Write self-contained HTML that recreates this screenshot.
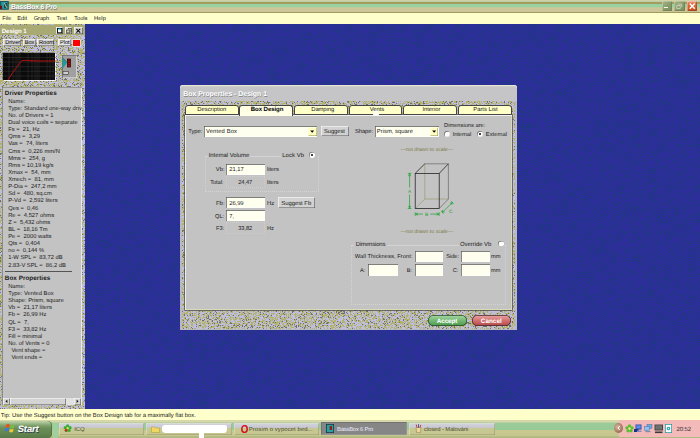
<!DOCTYPE html>
<html>
<head>
<meta charset="utf-8">
<title>BassBox 6 Pro</title>
<style>
html,body{margin:0;padding:0;background:#2b3396;}
body{width:700px;height:438px;overflow:hidden;position:relative;font-family:"Liberation Sans",sans-serif;font-size:6px;color:#202020;text-rendering:geometricPrecision;}
.a{position:absolute;}
.t{position:absolute;white-space:nowrap;line-height:7.1px;font-size:5.8px;}
.b{font-weight:bold;}
#titlebar{left:0;top:0;width:700px;height:12.7px;background:linear-gradient(#d6d0a2 0,#d0d0a4 .9px,#b8d0a8 1.1px,#b8d0a8 1.7px,#a49c5c 2.1px,#a49c5c 3.6px,#98d0a0 4.1px,#98d0a0 7.2px,#ccc698 7.6px,#ccc698 11.6px,#a49c5c 11.9px,#a49c5c 12.7px);}
#menubar{left:0;top:12.7px;width:700px;height:10.9px;background:#ffffcc;}
#mdi{left:0;top:23.6px;width:700px;height:385.7px;background:#2b3396;}
#status{left:0;top:409.2px;width:700px;height:11px;background:#ffffcc;}
#taskbar{left:0;top:420.1px;width:700px;height:17.9px;background:linear-gradient(#d0d09c 0,#dcdcb4 1.2px,#d0d0a0 2.2px,#9acc9a 3px,#98ca98 9.8px,#c8c890 10.4px,#c6c68e 15.6px,#b4bc86 16.2px,#b0b880 17.9px);}
/* left child window */
#child{left:0;top:24.3px;width:85px;height:385px;background:#b9b9a4;}
#childtitle{left:0;top:1px;width:84.7px;height:9.8px;background:#a9a974;}
.cbtn{position:absolute;top:1.8px;height:7.4px;width:7.6px;background:#d0d0d0;box-shadow:inset .6px .6px 0 #fff,inset -.6px -.6px 0 #444;}
.btn{position:absolute;background:#d4d4d4;box-shadow:inset .6px .6px 0 #fff,inset -.6px -.6px 0 #555;text-align:center;font-size:5.5px;line-height:7px;white-space:nowrap;}
#props{left:2.2px;top:63px;width:79.5px;height:318px;background:#c3c3c3;box-shadow:inset .6px .6px 0 #666,inset -.6px -.6px 0 #fff;overflow:hidden;}
#ptxt{left:2.6px;top:4.25px;white-space:nowrap;font-size:5.8px;}
#ptxt b,#ptxt i{display:block;height:7.134px;line-height:7.134px;font-style:normal;}
#ptxt b{font-size:6.3px;letter-spacing:.05px;position:relative;top:-1.4px;}
#ptxt i{padding-left:3.4px;}
.dd{background:#ffffc4;color:#000;box-shadow:inset .5px .5px 0 #fffff0,inset -.5px -.5px 0 #8c8c50;}
/* dialog */
#dlg{left:180px;top:85.2px;width:337px;height:245.3px;background:#b9b9c0;border-radius:3px 3px 0 0;}
#dlgtitle{left:0;top:0;width:337px;height:15.4px;background:#c5c5c7;border-radius:3px 3px 0 0;box-shadow:inset 0 1.2px 0 #e6e6d0;}
#dlgnoise{left:2px;top:15.4px;width:333px;height:228.6px;background:#b8b8a0;}
.tab{position:absolute;top:19.8px;height:10px;border-bottom-width:.9px !important;width:53.6px;background:#ffffc8;border:.6px solid #444;border-radius:3px 3px 0 0;box-sizing:border-box;text-align:center;font-size:6px;line-height:9px;}
#pane{left:5px;top:29.8px;width:327px;height:195.5px;background:#c3c3c3;box-shadow:inset .7px .7px 0 #fff,inset -.7px -.7px 0 #e4e4b8,0 0 0 .7px #484848;}
.inp{position:absolute;background:#fffff0;box-shadow:inset .7px .7px 0 #555,inset -.6px -.6px 0 #fff;font-size:6px;line-height:10px;white-space:nowrap;box-sizing:border-box;padding-left:2.5px;}
.flat{position:absolute;border:.6px dotted #cdcdcd;box-sizing:border-box;text-align:center;font-size:6px;line-height:9.5px;}
.grp{position:absolute;border:.6px dotted #d4d4d4;border-top:.6px solid #d4d4d4;box-sizing:border-box;}
.radio{position:absolute;width:5.8px;height:5.8px;border-radius:50%;background:#fff;box-shadow:inset .7px .7px 0 #666,inset -.5px -.5px 0 #ddd;}
.radio.on::after{content:"";position:absolute;left:1.8px;top:1.8px;width:2.2px;height:2.2px;border-radius:50%;background:#000;}
.tb{position:absolute;top:3px;height:12.4px;background:linear-gradient(#d4d4dc 0,#c8c8d6 4.4px,#c8c894 5px,#c6c690 12.4px);border-radius:1px;box-shadow:inset .5px .5px 0 #e4e4d0,inset -.5px -.5px 0 #94946c;font-size:5.8px;line-height:12.6px;white-space:nowrap;color:#333;}
</style>
</head>
<body>
<svg width="0" height="0" style="position:absolute"><defs>
<filter id="n1" x="0" y="0" width="100%" height="100%" color-interpolation-filters="sRGB">
<feTurbulence type="fractalNoise" baseFrequency="0.75" numOctaves="1" seed="5"/>
<feColorMatrix type="matrix" values="1 0 0 0 0  1 0 0 0 0  1 0 0 0 0  0 0 0 0 1"/>
<feComponentTransfer>
<feFuncR type="discrete" tableValues=".75 .75 .75 .75 .75 .75 .75 .75 .75 .75 .70 .75 .70 .45 .75 .70 .75 .70 .75 .70 .75 .45 .70 .75 .75 .75 .75 .75 .75 .75 .75 .75"/>
<feFuncG type="discrete" tableValues=".75 .75 .75 .75 .75 .75 .75 .75 .75 .75 .70 .75 .70 .45 .75 .70 .75 .70 .75 .70 .75 .45 .70 .75 .75 .75 .75 .75 .75 .75 .75 .75"/>
<feFuncB type="discrete" tableValues=".87 .87 .87 .87 .87 .87 .87 .87 .87 .87 .42 .87 .42 .43 .87 .42 .87 .42 .87 .42 .87 .43 .42 .87 .87 .87 .87 .87 .87 .87 .87 .87"/>
</feComponentTransfer>
</filter>
<filter id="n2" x="0" y="0" width="100%" height="100%" color-interpolation-filters="sRGB">
<feTurbulence type="fractalNoise" baseFrequency="0.72" numOctaves="1" seed="2"/>
<feColorMatrix type="matrix" values="1 0 0 0 0  1 0 0 0 0  1 0 0 0 0  0 0 0 0 1"/>
<feComponentTransfer>
<feFuncR type="discrete" tableValues=".18 .18 .18 .18 .18 .18 .18 .18 .18 .18 .18 .12 .18 .12 .18 .18 .18 .18 .12 .18 .12 .18 .18 .18 .18 .18 .18 .18 .18 .18 .18 .18"/>
<feFuncG type="discrete" tableValues=".18 .18 .18 .18 .18 .18 .18 .18 .18 .18 .18 .23 .18 .23 .18 .18 .18 .18 .23 .18 .23 .18 .18 .18 .18 .18 .18 .18 .18 .18 .18 .18"/>
<feFuncB type="discrete" tableValues=".61 .61 .61 .61 .61 .61 .61 .61 .61 .61 .61 .50 .61 .50 .61 .61 .61 .61 .50 .61 .50 .61 .61 .61 .61 .61 .61 .61 .61 .61 .61 .61"/>
</feComponentTransfer>
</filter>
</defs></svg>
<div class="a" id="mdi"><svg class="a" style="left:0;top:0" width="700" height="386"><rect width="700" height="386" filter="url(#n2)"/></svg></div>
<div class="a" style="left:0;top:23.4px;width:84.700px;height:2px;background:#dcdcd4"></div>

<div class="a" id="titlebar">
  <div class="a" style="left:661.900px;top:.9px;width:10.200px;height:10.200px;border-radius:1.500px;background:linear-gradient(135deg,#a4b48c,#869a68 60%,#7c9060);box-shadow:inset .5px .5px 0 #d0d8b8,inset -.5px -.5px 0 #66784c"><div class="a" style="left:2.600px;top:6.300px;width:3.600px;height:1.300px;background:#f4f4e8"></div></div>
  <div class="a" style="left:674.300px;top:.9px;width:10.300px;height:10.200px;border-radius:1.500px;background:linear-gradient(135deg,#a4b48c,#869a68 60%,#7c9060);box-shadow:inset .5px .5px 0 #d0d8b8,inset -.5px -.5px 0 #66784c"><svg class="a" style="left:0;top:0" width="10.300" height="10.200" viewBox="0 0 10.300 10.200"><path d="M4.300 3.200H7.700V6.200M2.800 4.600H6.200V7.600H2.800Z" fill="none" stroke="#d4dcc4" stroke-width=".8"/></svg></div>
  <div class="a" style="left:686.700px;top:.9px;width:10.500px;height:10.200px;border-radius:1.500px;background:linear-gradient(#f0a8a0 0,#e07048 25%,#d85c28 70%,#c04c20);box-shadow:inset .5px .5px 0 #f8d0c8,inset -.5px -.5px 0 #8c3818"><svg class="a" style="left:0;top:0" width="10.500" height="10.200" viewBox="0 0 10.500 10.200"><path d="M2.700 2.500L7.800 7.700M7.800 2.500L2.700 7.700" stroke="#fff" stroke-width="1.400"/></svg></div>
  <svg class="a" style="left:0;top:1px" width="8.800" height="8.800" viewBox="0 0 11 11"><rect x="0" y="0" width="11" height="11" fill="#1c5860"/><rect x="1.500" y="1.200" width="8" height="8.600" fill="#2a98a0"/><rect x="0" y="6" width="2.600" height="4" fill="#701010"/><rect x="5" y="2.500" width="4" height="6.500" fill="#184850"/><path d="M5.500 2.500L8.500 8.500" stroke="#d8d8a0" stroke-width="1.100"/></svg>
</div>

<div class="a" id="menubar">
</div>

<!-- LEFT CHILD WINDOW -->
<div class="a" id="child">
  <svg class="a" style="left:0;top:0" width="85" height="385"><rect width="85" height="385" filter="url(#n1)"/></svg>
  <div class="a" id="childtitle">
    <div class="cbtn" style="left:56px;width:7.4px"><svg class="a" style="left:0;top:0" width="7.4" height="7.4" viewBox="0 0 7.4 7.4"><rect x="1.500" y="1.500" width="4.300" height="4.300" fill="#fff" stroke="#111" stroke-width="1"/><rect x="2.500" y="1.600" width="2.500" height="1.500" fill="#40e0e0"/></svg></div>
    <div class="cbtn" style="left:64.600px;width:7.700px"><svg class="a" style="left:0;top:0" width="7.700" height="7.400" viewBox="0 0 7.700 7.400"><path d="M3 1.500H6.200V5M1.600 3H4.800V6H1.600Z" fill="none" stroke="#555530" stroke-width=".9"/></svg></div>
    <div class="cbtn" style="left:74px;width:8.600px"><svg class="a" style="left:0;top:0" width="8.600" height="7.400" viewBox="0 0 8.600 7.400"><path d="M2.400 1.900L6.200 5.700M6.200 1.900L2.400 5.700" stroke="#111" stroke-width="1.200"/></svg></div>
  </div>
  <div class="btn" style="left:3px;top:15px;width:18.2px;height:6.8px"></div>
  <div class="btn" style="left:23.3px;top:15px;width:12.6px;height:6.8px"></div>
  <div class="btn" style="left:37.3px;top:15px;width:16.7px;height:6.8px"></div>
  <div class="btn" style="left:58.2px;top:15px;width:13px;height:6.8px;background:#e4e4e4"></div>
  <div class="a" style="left:73.4px;top:15.7px;width:6.6px;height:6px;background:#f00;box-shadow:0 0 0 .6px #fff"></div>
  <!-- graph -->
  <div class="a" style="left:2.700px;top:28.800px;width:52.600px;height:27px;background:#0a0a0a;box-shadow:.8px .8px 0 #fff,-.5px -.5px 0 #666">
    <svg class="a" style="left:0;top:0" width="53" height="27.4" viewBox="0 0 53 27.4">
      <g stroke="#3a3a3a" stroke-width=".5">
        <path d="M0 4.5H53M0 9H53M0 13.7H53M0 18.3H53M0 23H53"/>
        <path d="M6 0V27.4M10 0V27.4M13 0V27.4M15 0V27.4M17 0V27.4M25 0V27.4M29 0V27.4M32 0V27.4M34 0V27.4M36 0V27.4M44 0V27.4M47 0V27.4M50 0V27.4"/>
      </g>
      <path d="M5 26.800L9.900 19.400L13.700 14.300L16.900 9.800Q18.300 7.700 19.900 7.500L26 7.300M33 8H52.600" fill="none" stroke="#b81010" stroke-width="1"/><path d="M26 7.700H33.200" stroke="#8c1010" stroke-width="1.500"/>
    </svg>
  </div>
  <!-- speaker icon -->
  <div class="a" style="left:62.3px;top:30.9px;width:15.1px;height:22.5px;background:#a0a0a0;box-shadow:inset .6px .6px 0 #555,inset -.6px -.6px 0 #eee">
    <svg class="a" style="left:0;top:0" width="15.1" height="22.5" viewBox="0 0 15.1 22.5">
      <path d="M.6 2.400L5.200 7.600L.6 13.800Z" fill="#1c9c9c"/><path d="M.6 2.400L5.200 7.600" stroke="#0c5858" stroke-width=".5"/>
      <rect x="5.400" y="4" width="3.200" height="8" fill="#a01414" stroke="#200" stroke-width=".7"/><path d="M6.200 5.500H7.800M6.200 7.500H7.800M6.200 9.500H7.800" stroke="#300" stroke-width=".7"/>
      <rect x="1" y="16.4" width="5.4" height="3" fill="#d0d0d0" stroke="#333" stroke-width=".6"/>
    </svg>
  </div>
  <!-- props -->
  <div class="a" id="props">
    <div class="a" id="ptxt">
      <b>Driver Properties</b>
      <i>Name:</i>
      <i>Type: Standard one-way driv</i>
      <i>No. of Drivers = 1</i>
      <i>Dual voice coils = separate</i>
      <i>Fs =&nbsp; 21, Hz</i>
      <i>Qms =&nbsp; 3,29</i>
      <i>Vas =&nbsp; 74, liters</i>
      <i>Cms =&nbsp; 0,226 mm/N</i>
      <i>Mms =&nbsp; 254, g</i>
      <i>Rms = 10,19 kg/s</i>
      <i>Xmax =&nbsp; 54, mm</i>
      <i>Xmech =&nbsp; 81, mm</i>
      <i>P-Dia =&nbsp; 247,2 mm</i>
      <i>Sd =&nbsp; 480, sq.cm</i>
      <i>P-Vd =&nbsp; 2,592 liters</i>
      <i>Qes =&nbsp; 0,46</i>
      <i>Re =&nbsp; 4,527 ohms</i>
      <i>Z =&nbsp; 5,432 ohms</i>
      <i>BL =&nbsp; 18,16 Tm</i>
      <i>Pe =&nbsp; 2000 watts</i>
      <i>Qts =&nbsp; 0,404</i>
      <i>no =&nbsp; 0,144 %</i>
      <i>1-W SPL =&nbsp; 83,72 dB</i>
      <i>2.83-V SPL =&nbsp; 86,2 dB</i>
      <b>&nbsp;</b>
      <b>Box Properties</b>
      <i>Name:</i>
      <i>Type: Vented Box</i>
      <i>Shape: Prism, square</i>
      <i>Vb =&nbsp; 21,17 liters</i>
      <i>Fb =&nbsp; 26,99 Hz</i>
      <i>QL =&nbsp; 7,</i>
      <i>F3 =&nbsp; 33,82 Hz</i>
      <i>Fill = minimal</i>
      <i>No. of Vents = 0</i>
      <i>&nbsp;&nbsp;Vent shape =</i>
      <i>&nbsp;&nbsp;Vent ends =</i>
    </div>
    <div class="a" style="left:3px;top:183.700px;width:67px;height:.6px;background:#555"></div>
    <!-- scrollbar -->
    <div class="a" style="left:.5px;top:310.700px;width:78.500px;height:6.600px;background:#e2e2e2"></div>
    <div class="btn" style="left:.5px;top:310.700px;width:7px;height:6.600px"><svg class="a" style="left:0;top:0" width="7" height="6.600" viewBox="0 0 7 6.600"><path d="M4.400 1.700V4.900L2.400 3.300Z" fill="#111"/></svg></div>
    <div class="btn" style="left:7.500px;top:310.700px;width:56.600px;height:6.600px"></div>
    <div class="btn" style="left:72.200px;top:310.700px;width:6.700px;height:6.600px"><svg class="a" style="left:0;top:0" width="6.700" height="6.600" viewBox="0 0 6.700 6.600"><path d="M2.600 1.700V4.900L4.600 3.300Z" fill="#111"/></svg></div>
  </div>
</div>

<!-- DIALOG -->
<div class="a" id="dlg">
  <div class="a" id="dlgnoise"><svg class="a" style="left:0;top:0" width="333" height="228.6"><rect width="333" height="228.6" filter="url(#n1)"/></svg></div>
  <div class="a" id="dlgtitle"></div>
  <div class="tab" style="left:5px"></div>
  <div class="tab" style="left:114px"></div>
  <div class="tab" style="left:168.6px"></div>
  <div class="tab" style="left:223.2px"></div>
  <div class="tab" style="left:277.8px;width:54.2px"></div>
  <div class="a" id="pane"></div>
  <div class="tab b" style="left:59.4px;top:19.5px;height:11.2px;background:#ffffe6;line-height:9.6px;color:#000;border-bottom:none"></div>

  <!-- type row -->
  <div class="inp" style="left:24.100px;top:40.400px;width:112.900px;height:11.400px"></div>
  <div class="btn dd" style="left:128.3px;top:41.9px;width:8.3px;height:9.2px;"><svg class="a" style="left:0;top:0" width="8.300" height="9.200" viewBox="0 0 8.300 9.200"><path d="M2.200 3.600H6.200L4.200 5.800Z" fill="#000"/></svg></div>
  <div class="btn" style="left:141px;top:41.200px;width:27.600px;height:10px;background:#d2d2d2"></div>
  <div class="inp" style="left:195px;top:40.400px;width:64.200px;height:11.400px"></div>
  <div class="btn dd" style="left:250px;top:41.9px;width:8.3px;height:9.200px;"><svg class="a" style="left:0;top:0" width="8.300" height="9.200" viewBox="0 0 8.300 9.200"><path d="M2.200 3.600H6.200L4.200 5.800Z" fill="#000"/></svg></div>
  <div class="radio" style="left:264.200px;top:45.800px"></div>
  <div class="radio on" style="left:297.100px;top:45.600px"></div>

  <!-- internal volume -->
  <div class="grp" style="left:24.9px;top:71.2px;width:113.7px;height:35.7px"></div>
  <div class="a" style="left:27.6px;top:69px;width:42.6px;height:5px;background:#c3c3c3"></div>
  <div class="a" style="left:100.8px;top:69px;width:37px;height:5px;background:#c3c3c3"></div>
  <div class="radio on" style="left:129.3px;top:66.7px;box-shadow:inset .6px .6px 0 #555,0 0 0 1.5px #c3c3c3"></div>
  <div class="inp" style="left:46px;top:79.100px;width:39px;height:11px"></div>
  <div class="flat" style="left:46px;top:90.900px;width:39px;height:11.500px"></div>

  <div class="inp" style="left:46px;top:111.900px;width:39px;height:11.200px"></div>
  <div class="btn" style="left:97.900px;top:112.300px;width:36.800px;height:11px;background:#d2d2d2"></div>
  <div class="inp" style="left:46px;top:125.100px;width:39px;height:10.400px"></div>
  <div class="flat" style="left:46px;top:136.900px;width:39px;height:11.500px"></div>

  <!-- box drawing -->
  <svg class="a" style="left:200px;top:54.800px" width="100" height="100" viewBox="380 140 100 100">
    <text x="426.700" y="150.500" font-size="5.200" text-anchor="middle" fill="#7c7c48" font-family="Liberation Sans, sans-serif">---not drawn to scale---</text>
    <text x="426.700" y="233.200" font-size="5.200" text-anchor="middle" fill="#7c7c48" font-family="Liberation Sans, sans-serif">---not drawn to scale---</text>
    <g fill="none" stroke="#8a8a50" stroke-width=".5">
      <path d="M424.800 199V163.800M424.800 199H448.400M424.800 199L415.200 208.500"/>
    </g>
    <g fill="none" stroke="#585858" stroke-width=".6">
      <path d="M424.800 163.800H448.400V199L439.200 208.500"/>
    </g>
    <g fill="none" stroke="#1c1c1c" stroke-width=".75">
      <rect x="415.200" y="173.400" width="24" height="35.100"/>
      <path d="M415.200 173.400L424.800 163.800M439.200 173.400L448.400 163.800"/>
    </g>
    <g fill="none" stroke="#18a030" stroke-width=".7">
      <path d="M409.600 173.600V187.500M409.600 194.500V208.300M407.800 173.400H411.400M407.800 208.500H411.400M408.400 176.200L409.600 173.800L410.800 176.200M408.400 205.800L409.600 208.200L410.800 205.800"/>
      <path d="M415.400 214.100H422.800M430.300 214.100H439M415.200 212.300V215.900M439.200 212.300V215.900M417.800 212.900L415.600 214.100L417.800 215.300M436.600 212.900L438.800 214.100L436.600 215.300"/>
      <path d="M442.200 212.400L452.400 202.500M441 211.100L443.500 213.700M451.200 201.200L453.700 203.800M444.600 211.900L442.500 212.100L442.700 210M450 203L452.100 202.800L451.900 204.900"/>
    </g>
    <g font-size="4.800" fill="#18a030" font-family="Liberation Sans, sans-serif" text-anchor="middle">
      <text x="409.600" y="192.800">A</text><text x="426.500" y="215.800">B</text><text x="450.800" y="212.800">C</text>
    </g>
  </svg>

  <!-- dimensions -->
  <div class="grp" style="left:171.3px;top:159.500px;width:154.500px;height:60px"></div>
  <div class="a" style="left:174.400px;top:157px;width:32.600px;height:5px;background:#c3c3c3"></div>
  <div class="a" style="left:278.700px;top:157px;width:45.500px;height:5px;background:#c3c3c3"></div>
  <div class="radio" style="left:318px;top:155.500px;box-shadow:inset .6px .6px 0 #555,0 0 0 1.500px #c3c3c3"></div>
  <div class="inp" style="left:234.600px;top:165.900px;width:28.900px;height:10.800px"></div>
  <div class="inp" style="left:280.600px;top:165.900px;width:29.400px;height:10.800px"></div>
  <div class="inp" style="left:188px;top:179px;width:29.800px;height:11.500px"></div>
  <div class="inp" style="left:234.600px;top:179px;width:28.900px;height:11.500px"></div>
  <div class="inp" style="left:280.600px;top:179px;width:29.400px;height:11.500px"></div>

  <!-- buttons -->
  <div class="a b" style="left:248px;top:229.900px;width:39px;height:11.300px;border-radius:5.600px;background:linear-gradient(#a8d8a8,#74b874 50%,#4c984c);box-shadow:inset 0 0 0 .7px #284828;color:#fff;text-align:center;font-size:6.200px;line-height:11.300px"></div>
  <div class="a b" style="left:292px;top:229.900px;width:39.300px;height:11.300px;border-radius:5.600px;background:linear-gradient(#e8a8a8,#d47070 50%,#b04848);box-shadow:inset 0 0 0 .7px #482828;color:#fff;text-align:center;font-size:6.200px;line-height:11.300px"></div>
</div>

<!-- mouse cursor -->
<svg class="a" style="left:372px;top:109px" width="9" height="8" viewBox="0 0 9 8"><path d="M1.600 1H6.400L7.100 6.700H.9Z" fill="#fffff4"/></svg>

<div class="a" id="status"></div>

<div class="a" id="taskbar">
  <div class="a" style="left:0;top:.8px;width:52.400px;height:17.100px;border-radius:0 4.500px 4.500px 0;background:linear-gradient(#c4d0a8 0,#a6c296 10%,#84a470 24%,#6c8e58 42%,#628450 75%,#587a48 100%);box-shadow:inset -.6px 0 0 #486838"></div>
  <svg class="a" style="left:4.600px;top:3.400px" width="11" height="11" viewBox="0 0 10 10"><path d="M1 1.500C2.200.8 3.300.8 4.400 1.500L3.800 4.300C2.800 3.700 1.700 3.700.5 4.300Z" fill="#e85020"/><path d="M5 1.700C6.100 2.400 7.300 2.400 8.600 1.700L8 4.500C6.800 5.200 5.600 5.200 4.500 4.500Z" fill="#70c040"/><path d="M.3 5C1.500 4.400 2.600 4.400 3.700 5L3.100 7.800C2 7.200.9 7.200-.3 7.800Z" fill="#3c78e0"/><path d="M4.300 5.200C5.400 5.900 6.600 5.900 7.900 5.200L7.300 8C6.100 8.700 4.900 8.700 3.800 8Z" fill="#f0c828"/></svg>
  <div class="a" style="left:53.300px;top:3px;width:4.600px;height:14.900px;background:#9cd09c"></div>

  <div class="tb" style="left:58.600px;width:85px"></div>
  <div class="tb" style="left:145.700px;width:86.500px"></div>
  <div class="tb" style="left:234.300px;width:84.300px"></div>
  <div class="tb" style="left:320.900px;width:86.100px;background:#868686;box-shadow:inset .5px .5px 0 #606060,inset -.5px -.5px 0 #a0a0a0;color:#d8d8ec;top:2.400px"></div>
  <div class="tb" style="left:409.400px;width:86px"></div>

  <!-- icons -->
  <svg class="a" style="left:63px;top:4.100px" width="9.300" height="8.600" viewBox="0 0 9 9"><g fill="#38b038"><circle cx="4.500" cy="2" r="1.700"/><circle cx="2" cy="3.800" r="1.700"/><circle cx="7" cy="3.800" r="1.700"/><circle cx="3" cy="6.800" r="1.700"/><circle cx="6" cy="6.800" r="1.700"/></g><circle cx="3" cy="6.600" r="1.500" fill="#d03020"/><circle cx="4.500" cy="4.500" r="1.100" fill="#f0e040"/></svg>
  <svg class="a" style="left:151px;top:4.600px" width="9" height="8" viewBox="0 0 9 8"><path d="M.5 2H3.500L4.300 3H8.500V7.500H.5Z" fill="#f0d860" stroke="#a08820" stroke-width=".4"/></svg>
  <div class="a" style="left:162.300px;top:5px;width:65.200px;height:7.600px;background:#fff;border-radius:3px 2px 3px 4px/3px 2px 4px 3px"></div>
  <div class="a" style="left:199.200px;top:9px;width:5.100px;height:9px;background:#fff"></div>
  <svg class="a" style="left:240.600px;top:4.600px" width="7" height="8" viewBox="0 0 7 8"><ellipse cx="3.500" cy="4" rx="2.700" ry="3.400" fill="none" stroke="#d01818" stroke-width="1.500"/></svg>
  <svg class="a" style="left:326.400px;top:4.300px" width="8" height="9" viewBox="0 0 8 9"><rect width="8" height="9" fill="#203840"/><rect x=".8" y=".8" width="6.400" height="7.400" fill="#28a0a0"/><rect x="3.600" y="2" width="2.400" height="4" fill="#902020"/></svg>
  <svg class="a" style="left:415.300px;top:4.200px" width="7" height="9" viewBox="0 0 7 9"><path d="M1 3.500H6L5.400 8.600H1.600Z" fill="#e8d8a0" stroke="#806020" stroke-width=".4"/><path d="M2 3.500L1.200.5M3.500 3.500V.3M5 3.500L5.800.8" stroke-width=".9" stroke="#c03030"/><path d="M3.500 3.500V.3" stroke="#3060c0" stroke-width=".9"/></svg>

  <!-- tray -->
  <div class="a" style="left:618.500px;top:0;width:81.500px;height:17.400px;background:#f4baba"></div>
  <div class="a" style="left:614px;top:3.400px;width:9px;height:9.400px;border-radius:50%;background:radial-gradient(circle at 40% 40%,#d8b8a0,#a87860 60%,#805040)"></div>
  <svg class="a" style="left:615.500px;top:5.400px" width="6" height="6" viewBox="0 0 6 6"><path d="M3.800 1L2 3L3.800 5" fill="none" stroke="#fff" stroke-width="1"/></svg>
  <svg class="a" style="left:624.800px;top:3.900px" width="9" height="9" viewBox="0 0 8 8"><g fill="#58c030"><circle cx="4" cy="1.800" r="1.500"/><circle cx="1.800" cy="3.400" r="1.500"/><circle cx="6.200" cy="3.400" r="1.500"/><circle cx="2.700" cy="6" r="1.500"/><circle cx="5.300" cy="6" r="1.500"/></g><circle cx="4" cy="4" r="1" fill="#e8f080"/></svg>
  <svg class="a" style="left:634.400px;top:4px" width="8" height="9" viewBox="0 0 8 9"><rect x="1.500" y=".5" width="6" height="5" fill="#2848b0"/><rect x="2.300" y="1.300" width="4.400" height="3.200" fill="#6090e0"/><rect x="0" y="5" width="4.500" height="3" fill="#203080"/><rect x="3" y="6.500" width="4.500" height="1.500" fill="#8090c0"/></svg>
  <svg class="a" style="left:644px;top:4px" width="8.500" height="9" viewBox="0 0 8.500 9"><rect x="3" y=".3" width="5" height="4.200" fill="#70a8e0" stroke="#406090" stroke-width=".4"/><rect x=".5" y="2.500" width="5" height="4.200" fill="#90c0f0" stroke="#406090" stroke-width=".4"/><rect x="1.500" y="7" width="5" height="1.200" fill="#8090a0"/></svg>
  <svg class="a" style="left:654px;top:3.600px" width="9.500" height="10" viewBox="0 0 9.500 10"><rect x=".5" y=".5" width="8.500" height="6" fill="#484848"/><rect x="1.500" y="1.300" width="6.500" height="4.200" fill="#707070"/><rect x="1" y="7.500" width="7.500" height="1.600" fill="#383838"/></svg>
  <svg class="a" style="left:665px;top:4px" width="7" height="9" viewBox="0 0 7 9"><rect x=".3" y=".3" width="6.400" height="8.400" fill="#fff" stroke="#1898a0" stroke-width=".8"/><circle cx="3.500" cy="4.500" r="1.800" fill="#18a0a8"/><circle cx="3.500" cy="4.500" r=".7" fill="#fff"/></svg>
</div>
<!--TEXTS-->
<span class="t" id="title" style="left:11.00px;top:3.50px;font-size:6.84px;line-height:8.8px;letter-spacing:-0.198px;font-weight:bold;color:#fff;text-shadow:.6px .6px 0 #777;">BassBox 6 Pro</span>
<span class="t" id="m1" style="left:2.28px;top:16.14px;font-size:5.76px;line-height:7.8px;letter-spacing:-0.000px;">File</span>
<span class="t" id="m2" style="left:17.28px;top:16.14px;font-size:5.76px;line-height:7.8px;letter-spacing:-0.000px;">Edit</span>
<span class="t" id="m3" style="left:33.72px;top:16.14px;font-size:5.76px;line-height:7.8px;letter-spacing:-0.100px;">Graph</span>
<span class="t" id="m4" style="left:56.52px;top:16.14px;font-size:5.76px;line-height:7.8px;letter-spacing:-0.000px;">Test</span>
<span class="t" id="m5" style="left:74.19px;top:16.14px;font-size:5.76px;line-height:7.8px;letter-spacing:-0.065px;">Tools</span>
<span class="t" id="m6" style="left:94.00px;top:16.14px;font-size:5.76px;line-height:7.8px;letter-spacing:-0.000px;">Help</span>
<span class="t" id="ct" style="left:1.81px;top:27.92px;font-size:6.08px;line-height:8.1px;letter-spacing:-0.080px;font-weight:bold;color:#fff;">Design 1</span>
<span class="t" id="b1" style="left:5.14px;top:39.68px;font-size:5.6px;line-height:7.6px;letter-spacing:0.030px;color:#000;">Driver</span>
<span class="t" id="b2" style="left:24.72px;top:39.68px;font-size:5.6px;line-height:7.6px;letter-spacing:-0.000px;color:#000;">Box</span>
<span class="t" id="b3" style="left:39.00px;top:39.68px;font-size:5.6px;line-height:7.6px;letter-spacing:-0.000px;color:#000;">Room</span>
<span class="t" id="b4" style="left:60.00px;top:39.68px;font-size:5.6px;line-height:7.6px;letter-spacing:-0.000px;color:#000;">Plot</span>
<span class="t" id="dt" style="left:183.19px;top:90.93px;font-size:6.95px;line-height:8.9px;letter-spacing:-0.023px;font-weight:bold;color:#fff;text-shadow:.5px .5px 0 #888;">Box Properties - Design 1</span>
<span class="t" id="tb1" style="left:197.28px;top:107.45px;font-size:5.89px;line-height:7.9px;letter-spacing:-0.028px;">Description</span>
<span class="t" id="tb2" style="left:250.78px;top:105.99px;font-size:6.07px;line-height:8.1px;letter-spacing:-0.078px;font-weight:bold;color:#000;">Box Design</span>
<span class="t" id="tb3" style="left:311.28px;top:107.45px;font-size:5.89px;line-height:7.9px;letter-spacing:-0.100px;">Damping</span>
<span class="t" id="tb4" style="left:369.84px;top:107.45px;font-size:5.89px;line-height:7.9px;letter-spacing:-0.100px;">Vents</span>
<span class="t" id="tb5" style="left:422.48px;top:107.45px;font-size:5.89px;line-height:7.9px;letter-spacing:-0.060px;">Interior</span>
<span class="t" id="tb6" style="left:473.28px;top:107.45px;font-size:5.89px;line-height:7.9px;letter-spacing:-0.016px;">Parts List</span>
<span class="t" id="l1" style="left:188.28px;top:129.01px;font-size:5.85px;line-height:7.8px;letter-spacing:-0.100px;">Type:</span>
<span class="t" id="v1" style="left:206.00px;top:129.01px;font-size:5.85px;line-height:7.8px;letter-spacing:0.124px;">Vented Box</span>
<span class="t" id="bs" style="left:324.00px;top:129.01px;font-size:5.85px;line-height:7.8px;letter-spacing:-0.100px;">Suggest</span>
<span class="t" id="l2" style="left:355.00px;top:129.01px;font-size:5.85px;line-height:7.8px;letter-spacing:-0.100px;">Shape:</span>
<span class="t" id="v2" style="left:376.81px;top:129.01px;font-size:5.85px;line-height:7.8px;letter-spacing:0.012px;">Prism, square</span>
<span class="t" id="l3" style="left:444.00px;top:122.65px;font-size:5.73px;line-height:7.7px;letter-spacing:0.000px;">Dimensions are:</span>
<span class="t" id="l4" style="left:452.72px;top:131.59px;font-size:5.78px;line-height:7.8px;letter-spacing:-0.100px;">Internal</span>
<span class="t" id="l5" style="left:485.81px;top:131.59px;font-size:5.78px;line-height:7.8px;letter-spacing:0.020px;">External</span>
<span class="t" id="g1" style="left:208.72px;top:153.04px;font-size:5.94px;line-height:7.9px;letter-spacing:-0.050px;">Internal Volume</span>
<span class="t" id="g2" style="left:282.28px;top:153.04px;font-size:5.94px;line-height:7.9px;letter-spacing:0.047px;">Lock Vb</span>
<span class="t" id="l6" style="left:215.84px;top:167.41px;font-size:5.81px;line-height:7.8px;letter-spacing:-0.000px;">Vb:</span>
<span class="t" id="v3" style="left:229.28px;top:167.41px;font-size:5.81px;line-height:7.8px;letter-spacing:-0.030px;">21,17</span>
<span class="t" id="u1" style="left:267.00px;top:167.41px;font-size:5.81px;line-height:7.8px;letter-spacing:-0.084px;">liters</span>
<span class="t" id="l7" style="left:210.19px;top:179.59px;font-size:5.71px;line-height:7.7px;letter-spacing:-0.072px;">Total:</span>
<span class="t" id="v4" style="left:238.28px;top:179.59px;font-size:5.71px;line-height:7.7px;letter-spacing:-0.100px;">24,47</span>
<span class="t" id="u2" style="left:267.00px;top:179.59px;font-size:5.71px;line-height:7.7px;letter-spacing:-0.084px;">liters</span>
<span class="t" id="l8" style="left:216.00px;top:200.98px;font-size:5.91px;line-height:7.9px;letter-spacing:-0.000px;">Fb:</span>
<span class="t" id="v5" style="left:229.28px;top:200.98px;font-size:5.91px;line-height:7.9px;letter-spacing:-0.100px;">26,99</span>
<span class="t" id="u3" style="left:267.00px;top:200.98px;font-size:5.91px;line-height:7.9px;letter-spacing:-0.000px;">Hz</span>
<span class="t" id="bf" style="left:281.28px;top:200.98px;font-size:5.91px;line-height:7.9px;letter-spacing:-0.031px;">Suggest Fb</span>
<span class="t" id="l9" style="left:215.00px;top:213.71px;font-size:5.68px;line-height:7.7px;letter-spacing:-0.000px;">QL:</span>
<span class="t" id="v6" style="left:229.28px;top:213.71px;font-size:5.68px;line-height:7.7px;letter-spacing:-0.000px;">7,</span>
<span class="t" id="l10" style="left:216.00px;top:226.01px;font-size:5.67px;line-height:7.7px;letter-spacing:-0.000px;">F3:</span>
<span class="t" id="v7" style="left:238.28px;top:226.01px;font-size:5.67px;line-height:7.7px;letter-spacing:-0.040px;">33,82</span>
<span class="t" id="u4" style="left:267.00px;top:226.01px;font-size:5.67px;line-height:7.7px;letter-spacing:-0.000px;">Hz</span>
<span class="t" id="g3" style="left:355.81px;top:242.06px;font-size:5.94px;line-height:7.9px;letter-spacing:-0.156px;">Dimensions</span>
<span class="t" id="g4" style="left:460.00px;top:242.06px;font-size:5.94px;line-height:7.9px;letter-spacing:-0.042px;">Override Vb</span>
<span class="t" id="l11" style="left:354.81px;top:253.72px;font-size:5.78px;line-height:7.8px;letter-spacing:0.047px;">Wall Thickness, Front:</span>
<span class="t" id="l12" style="left:446.28px;top:253.72px;font-size:5.78px;line-height:7.8px;letter-spacing:-0.100px;">Side:</span>
<span class="t" id="u5" style="left:491.00px;top:253.72px;font-size:5.78px;line-height:7.8px;letter-spacing:-0.000px;">mm</span>
<span class="t" id="l13" style="left:360.00px;top:267.79px;font-size:5.6px;line-height:7.6px;letter-spacing:-0.000px;">A:</span>
<span class="t" id="l14" style="left:406.72px;top:267.79px;font-size:5.6px;line-height:7.6px;letter-spacing:-0.000px;">B:</span>
<span class="t" id="l15" style="left:452.72px;top:267.79px;font-size:5.6px;line-height:7.6px;letter-spacing:-0.000px;">C:</span>
<span class="t" id="u6" style="left:491.00px;top:267.79px;font-size:5.6px;line-height:7.6px;letter-spacing:-0.000px;">mm</span>
<span class="t" id="ba" style="left:436.72px;top:317.62px;font-size:6.35px;line-height:8.3px;letter-spacing:-0.100px;font-weight:bold;color:#fff;">Accept</span>
<span class="t" id="bc" style="left:480.81px;top:317.62px;font-size:6.35px;line-height:8.3px;letter-spacing:0.028px;font-weight:bold;color:#fff;">Cancel</span>
<span class="t" id="st" style="left:0.78px;top:413.18px;font-size:5.88px;line-height:7.9px;letter-spacing:-0.004px;">Tip: Use the Suggest button on the Box Design tab for a maximally flat box.</span>
<span class="t" id="ts" style="left:17.72px;top:423.20px;font-size:9.39px;line-height:11.4px;letter-spacing:-0.100px;font-weight:bold;font-style:italic;color:#fff;text-shadow:.7px .7px .5px #345;">Start</span>
<span class="t" id="k1" style="left:74.19px;top:426.79px;font-size:5.88px;line-height:7.9px;letter-spacing:-0.000px;color:#4c4c40;">ICQ</span>
<span class="t" id="k2" style="left:248.78px;top:426.79px;font-size:5.88px;line-height:7.9px;letter-spacing:0.102px;color:#4c4c40;">Prosím o vypocet bed...</span>
<span class="t" id="k3" style="left:337.00px;top:426.79px;font-size:5.88px;line-height:7.9px;letter-spacing:-0.222px;color:#ececff;">BassBox 6 Pro</span>
<span class="t" id="k4" style="left:424.08px;top:426.79px;font-size:5.88px;line-height:7.9px;letter-spacing:-0.105px;color:#4c4c40;">closed - Malování</span>
<span class="t" id="ck" style="left:676.52px;top:425.71px;font-size:5.99px;line-height:8.0px;letter-spacing:-0.100px;color:#333;">20:52</span>
<!--/TEXTS-->
</body>
</html>
